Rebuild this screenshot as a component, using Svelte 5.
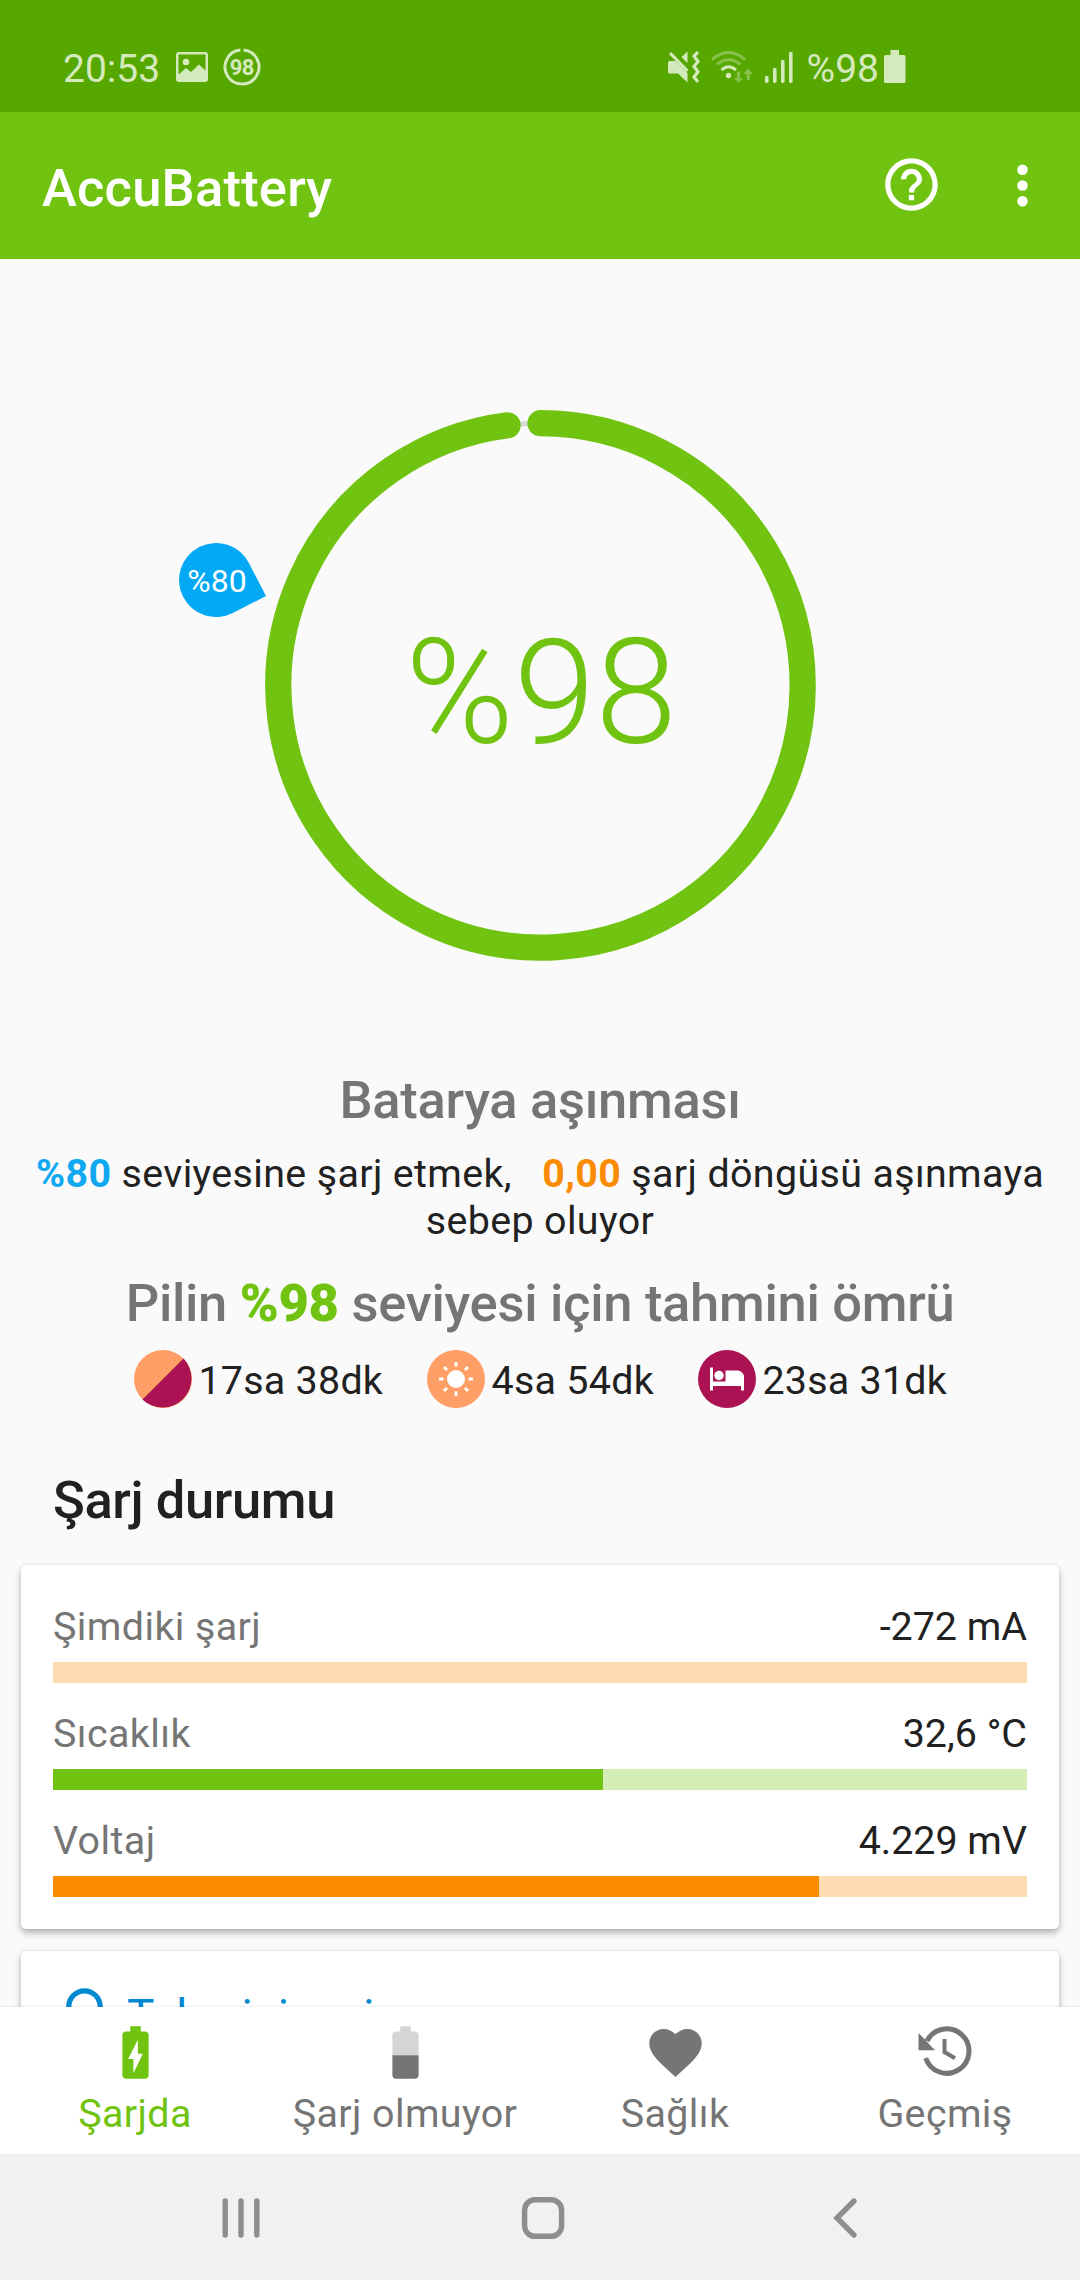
<script>
  const level = 98;
  const cx = 540.5;
  const cy = 685.4;
  const radius = 262.2;
  const angle = (level / 100) * 2 * Math.PI;
  const endX = cx + radius * Math.sin(angle);
  const endY = cy - radius * Math.cos(angle);

  const meters = [
    { label: 'Şimdiki şarj', value: '-272 mA', percent: 0, tone: 'orange' },
    { label: 'Sıcaklık', value: '32,6 °C', percent: 56.5, tone: 'green' },
    { label: 'Voltaj', value: '4.229 mV', percent: 78.65, tone: 'orange' }
  ];
</script>

<div class="screen">
  <header class="status">
    <div class="status-left">
      <span class="clock">20:53</span>
      <svg class="ic-picture" width="32" height="30" viewBox="0 0 32 30">
        <path fill-rule="evenodd" d="M3 0H29A3 3 0 0 1 32 3V27A3 3 0 0 1 29 30H3A3 3 0 0 1 0 27V3A3 3 0 0 1 3 0ZM2.5 2.5V22.5L10 16L15 20L23 12.5L29.5 18.5V2.5Z" />
        <circle cx="10" cy="10" r="3.3" />
      </svg>
      <svg class="ic-level" width="38" height="38" viewBox="0 0 38 38">
        <path d="M20.6 2.1A17 17 0 1 1 17.4 2.1" fill="none" stroke="currentColor" stroke-width="3" />
        <text x="19" y="26.8" text-anchor="middle" font-size="22" font-weight="700" textLength="24.5">98</text>
      </svg>
    </div>
    <div class="status-right">
      <svg class="ic-mute" width="32" height="32" viewBox="0 0 32 32">
        <path d="M1.5 10H7.5L19.5 22V31.5L10 22.5H1.5A1.5 1.5 0 0 1 0 21V11.5A1.5 1.5 0 0 1 1.5 10ZM19.5 .5V12L13.5 6Z" />
        <path d="M2 2L19.5 20M30 1L26 5.2L30 10.4L26 15.6L30 20.8L26 26L30 31" fill="none" stroke="currentColor" stroke-width="3.2" />
      </svg>
      <svg class="ic-wifi" width="42" height="33" viewBox="0 0 42 33">
        <g fill="none" stroke="currentColor" stroke-width="3">
          <path opacity=".4" d="M1 8.5Q17.5 -5.5 34 8.5M6 13.5Q17.5 4 29.5 13.5" />
          <path d="M10.5 19Q17.5 12.5 25 19" />
        </g>
        <circle cx="17.5" cy="24.5" r="2.7" />
        <path opacity=".4" d="M26 20.5H29V27H32L27.5 32L23 27H26ZM35.7 29H38.7V23H42L37.2 17.5L32.5 23H35.7Z" />
      </svg>
      <svg class="ic-signal" width="28" height="31" viewBox="0 0 28 31">
        <rect x="0" y="24" width="3.6" height="7" rx="1.4" /><rect x="8" y="16" width="3.6" height="15" rx="1.4" />
        <rect x="16" y="8" width="3.6" height="23" rx="1.4" /><rect x="24" y="0" width="3.6" height="31" rx="1.4" />
      </svg>
      <span class="clock">%98</span>
      <svg class="ic-batt" width="22" height="33" viewBox="0 0 22 33">
        <path d="M6.5 0H15V5H20A1.6 1.6 0 0 1 21.5 6.6V31.4A1.6 1.6 0 0 1 20 33H1.6A1.6 1.6 0 0 1 0 31.4V6.6A1.6 1.6 0 0 1 1.6 5H6.5Z" />
      </svg>
    </div>
  </header>

  <div class="appbar">
    <h1>AccuBattery</h1>
    <svg class="ic-help" width="63" height="63" viewBox="0 0 24 24">
      <path d="M11 18h2v-2h-2v2zm1-16C6.48 2 2 6.48 2 12s4.48 10 10 10 10-4.48 10-10S17.52 2 12 2zm0 18c-4.41 0-8-3.59-8-8s3.59-8 8-8 8 3.59 8 8-3.59 8-8 8zm0-14c-2.21 0-4 1.79-4 4h2c0-1.1.9-2 2-2s2 .9 2 2c0 2-3 1.75-3 5h2c0-2.25 3-2.5 3-5 0-2.21-1.79-4-4-4z" />
    </svg>
    <svg class="ic-more" width="63" height="63" viewBox="0 0 24 24">
      <circle cx="12" cy="6" r="2" /><circle cx="12" cy="12" r="2" /><circle cx="12" cy="18" r="2" />
    </svg>
  </div>

  <main>
    <svg class="gauge" width="1080" height="810" viewBox="0 259 1080 810">
      <circle {cx} {cy} r={radius} fill="none" stroke="#d8d8d8" stroke-width="5" />
      <path d="M{cx} {cy - radius}A{radius} {radius} 0 1 1 {endX} {endY}" fill="none" stroke="#70c411" stroke-width="26.25" stroke-linecap="round" />
      <path d="M266 596L232.8 613A37 37 0 1 1 249 563.2Z" fill="#03a9f4" />
      <text class="mark" x="217" y="591.5" text-anchor="middle">%80</text>
      <text class="level" x="541" y="742.5" text-anchor="middle">%98</text>
    </svg>

    <h2>Batarya aşınması</h2>
    <p class="wear"><b class="blue">%80</b> seviyesine şarj etmek, &nbsp; <b class="amber">0,00</b> şarj döngüsü aşınmaya<br />sebep oluyor</p>
    <h2 class="life">Pilin <b>%98</b> seviyesi için tahmini ömrü</h2>

    <div class="estimates">
      <div class="est">
        <svg width="58" height="58" viewBox="0 0 58 58">
          <circle cx="29" cy="29" r="29" fill="#ff9e66" />
          <path d="M49.5 8.5A29 29 0 0 1 8.5 49.5Z" fill="#aa1254" />
        </svg>
        <span>17sa 38dk</span>
      </div>
      <div class="est">
        <svg width="58" height="58" viewBox="0 0 58 58">
          <circle cx="29" cy="29" r="29" fill="#ff9e66" />
          <circle cx="29" cy="29" r="9" fill="#fff" />
          <path d="M29 12V16.5M29 41.5V46M12 29H16.5M41.5 29H46M17 17L20 20M38 38L41 41M17 41L20 38M38 20L41 17" stroke="#fff" stroke-width="3" />
        </svg>
        <span>4sa 54dk</span>
      </div>
      <div class="est">
        <svg width="58" height="58" viewBox="0 0 58 58">
          <circle cx="29" cy="29" r="29" fill="#aa1254" />
          <path d="M12 17.5H15V31.5H27.5V20.5H39.5A6.5 6.5 0 0 1 46 27V40.5H43V36H15V40.5H12Z" fill="#fff" />
          <circle cx="21" cy="25.5" r="4.7" fill="#fff" />
        </svg>
        <span>23sa 31dk</span>
      </div>
    </div>

    <h3>Şarj durumu</h3>
    <section class="card meters">
      {#each meters as m}
        <div class="meter">
          <div class="meter-text"><span class="label">{m.label}</span><span>{m.value}</span></div>
          <div class="bar {m.tone}"><div class="fill" style="width: {m.percent}%"></div></div>
        </div>
      {/each}
    </section>
    <section class="card tip">
      <svg width="63" height="63" viewBox="0 0 24 24">
        <path d="M9 21c0 .55.45 1 1 1h4c.55 0 1-.45 1-1v-1H9v1zm3-19C8.14 2 5 5.14 5 9c0 2.38 1.19 4.47 3 5.74V17c0 .55.45 1 1 1h6c.55 0 1-.45 1-1v-2.26c1.81-1.27 3-3.36 3-5.74 0-3.86-3.14-7-7-7zm2.85 11.1l-.85.6V16h-4v-2.3l-.85-.6C7.8 12.16 7 10.63 7 9c0-2.76 2.24-5 5-5s5 2.24 5 5c0 1.63-.8 3.16-2.15 4.1z" />
      </svg>
      <span>Tahmini şarj</span>
    </section>
  </main>

  <nav class="tabs">
    <div class="tab active">
      <svg width="63" height="63" viewBox="0 0 24 24">
        <path d="M15.67 4H14V2h-4v2H8.33C7.6 4 7 4.6 7 5.33v15.33C7 21.4 7.6 22 8.33 22h7.33c.74 0 1.34-.6 1.34-1.33V5.33C17 4.6 16.4 4 15.67 4zM11.2 19.9v-5.4H9.2L12.9 7.1v5.4H14.8z" />
      </svg>
      <span>Şarjda</span>
    </div>
    <div class="tab">
      <svg width="63" height="63" viewBox="0 0 24 24">
        <path opacity=".3" d="M17 5.33C17 4.6 16.4 4 15.67 4H14V2h-4v2H8.33C7.6 4 7 4.6 7 5.33V13h10z" />
        <path d="M7 13v7.67C7 21.4 7.6 22 8.33 22h7.33c.74 0 1.34-.6 1.34-1.33V13z" />
      </svg>
      <span>Şarj olmuyor</span>
    </div>
    <div class="tab">
      <svg width="63" height="63" viewBox="0 0 24 24">
        <path d="M12 21.35l-1.45-1.32C5.4 15.36 2 12.28 2 8.5 2 5.42 4.42 3 7.5 3c1.74 0 3.41.81 4.5 2.09C13.09 3.81 14.76 3 16.5 3 19.58 3 22 5.42 22 8.5c0 3.78-3.4 6.86-8.55 11.54z" />
      </svg>
      <span>Sağlık</span>
    </div>
    <div class="tab">
      <svg width="63" height="63" viewBox="0 0 63 63">
        <path d="M13 20A22.2 22.2 0 1 1 11.7 37" fill="none" stroke="currentColor" stroke-width="5" />
        <path d="M4.5 12V29.2H21.1L15.5 23.5L10.5 18Z" />
        <path d="M30.5 18V31L41 37.3" fill="none" stroke="currentColor" stroke-width="4" />
      </svg>
      <span>Geçmiş</span>
    </div>
  </nav>

  <footer class="sysnav">
    <svg width="1080" height="126" viewBox="0 2154 1080 126">
      <path d="M225.2 2201V2235M241 2201V2235M256.8 2201V2235" />
      <rect x="524.6" y="2199.7" width="37" height="36.6" rx="10.5" />
      <path class="back" d="M854 2201L837 2218L854 2235" />
    </svg>
  </footer>
</div>

<style>
  :global(body) { background: #fafafa; }
  .screen {
    width: 1080px;
    height: 2280px;
    display: flex;
    flex-direction: column;
    overflow: hidden;
    background: #fafafa;
    color: #212121;
    font-family: Roboto, "Noto Sans", sans-serif;
    font-size: 39.4px;
  }
  svg { display: block; flex: none; fill: currentColor; }
  h1, h2, h3, p { margin: 0; }

  .status {
    height: 112px;
    flex: none;
    box-sizing: border-box;
    padding: 0 174.5px 0 63px;
    display: flex;
    justify-content: space-between;
    background: #56a700;
    color: #d4eabd;
    font-size: 39px;
  }
  .status-left, .status-right { display: flex; align-items: flex-start; }
  .clock { line-height: 46px; padding-top: 46px; }
  .ic-picture { margin: 52px 0 0 16px; }
  .ic-level { margin: 48px 0 0 14.5px; }
  .ic-mute { margin-top: 51px; }
  .ic-wifi { margin: 51px 0 0 11.5px; }
  .ic-signal { margin: 52px 14px 0 11.5px; }
  .ic-batt { margin: 50px 0 0 4.5px; }

  .appbar {
    height: 147px;
    flex: none;
    box-sizing: border-box;
    padding: 0 26px 0 42px;
    display: flex;
    align-items: center;
    background: #70c411;
    color: #fff;
  }
  h1 { flex: 1; padding-top: 5px; font-size: 52.5px; line-height: 62px; font-weight: 500; letter-spacing: .2px; }
  .ic-help { margin: 0 48px 2px 0; }

  main { flex: 1; min-height: 0; overflow: hidden; }
  .mark { font-size: 32px; fill: #fff; }
  .level { font-size: 147px; font-weight: 300; fill: #70c411; }
  h2 { font-size: 52.5px; line-height: 62px; font-weight: 500; text-align: center; color: #757575; letter-spacing: -.3px; }
  .wear { margin: 18.5px 0 28.5px; line-height: 47px; text-align: center; white-space: nowrap; letter-spacing: .36px; }
  .blue { color: #10a8f0; }
  .amber { color: #fb8c00; }
  h2 b { color: #70c411; font-weight: 900; }

  .estimates { margin-top: 16px; padding-left: 1px; display: flex; justify-content: center; gap: 44px; }
  .est { display: flex; align-items: center; gap: 6.5px; line-height: 46px; letter-spacing: .27px; }
  .est span { padding-top: 3px; }

  h3 { margin: 61px 0 34px 53px; font-size: 52.5px; line-height: 62px; font-weight: 500; letter-spacing: -.4px; }
  .card {
    margin: 0 21px 22px;
    border-radius: 5px;
    background: #fff;
    box-shadow: 0 4px 7px rgba(0, 0, 0, .28), 0 0 3px rgba(0, 0, 0, .1);
  }
  .meters { height: 364px; box-sizing: border-box; padding: 36px 32px 0; display: flex; flex-direction: column; gap: 25px; }
  .meter-text { display: flex; justify-content: space-between; line-height: 52px; margin-bottom: 9px; }
  .label { color: #757575; letter-spacing: .42px; }
  .bar { height: 21px; }
  .fill { height: 100%; }
  .orange { background: #fddcb2; }
  .orange .fill { background: #fb8c00; }
  .green { background: #d4edb7; }
  .green .fill { background: #70c411; }
  .tip { height: 240px; padding: 32px 32px 0; display: flex; align-items: flex-start; gap: 11px; color: #0288d1; font-size: 46px; line-height: 63px; letter-spacing: -.25px; }
  .tip span { padding-top: 2px; }

  .tabs {
    height: 147px;
    flex: none;
    position: relative;
    display: grid;
    grid-template-columns: repeat(4, 1fr);
    background: #fff;
    color: #757575;
    box-shadow: 0 0 3px rgba(0, 0, 0, .12);
  }
  .tab { display: flex; flex-direction: column; align-items: center; padding-top: 14px; line-height: 46px; gap: 7px; letter-spacing: .4px; }
  .active { color: #70c411; }
  .sysnav { height: 126px; flex: none; position: relative; background: #f1f1f1; }
  .sysnav svg { fill: none; stroke: #8e8e8e; stroke-width: 5.4px; stroke-linecap: round; stroke-linejoin: round; }
  .sysnav .back { stroke-linejoin: miter; }
</style>
